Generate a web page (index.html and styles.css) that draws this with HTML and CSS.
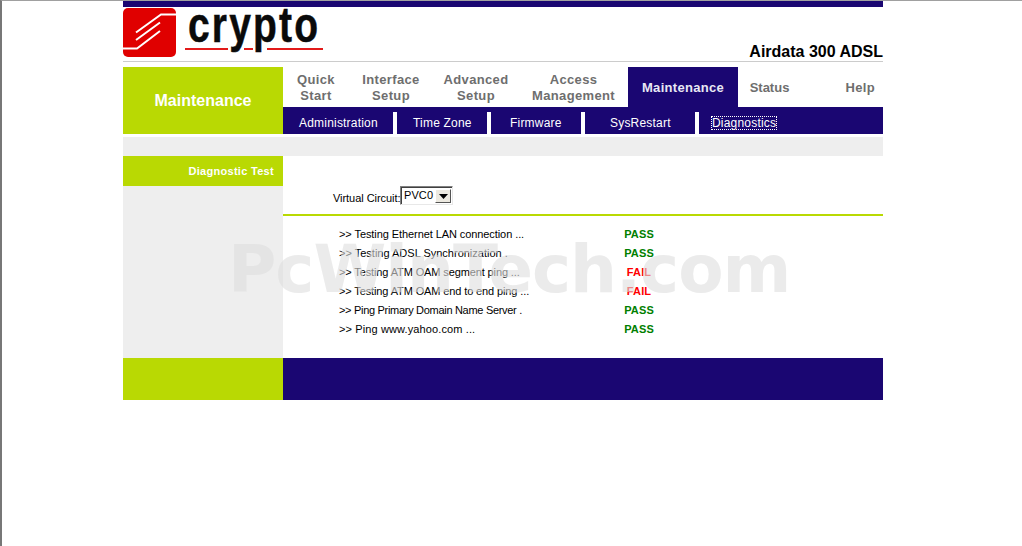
FILE: index.html
```html
<!DOCTYPE html>
<html lang="en">
<head>
<meta charset="utf-8">
<title>Airdata 300 ADSL - Diagnostics</title>
<link rel="stylesheet" href="styles.css">
</head>
<body>
<div class="page">
  <div class="topbar"></div>
  <header class="header">
    <svg class="logo-mark" viewBox="0 0 53 49" width="53" height="49" aria-hidden="true">
      <path d="M5 0H48a5 5 0 0 1 5 5V44a5 5 0 0 1-5 5H5a5 5 0 0 1-5-5V5a5 5 0 0 1 5-5Z" fill="#e00000"/>
      <path d="M53 6.500H38L13 24.500M37 14.500L13 32M37 23L14 40.500H0" fill="none" stroke="#fff" stroke-width="2"/>
    </svg>
    <div class="wordmark">
      <span class="rule rule-a"></span>
      <span class="rule rule-b"></span>
      <span class="rule rule-c"></span>
      <span class="wordmark-text">crypto</span>
    </div>
    <div class="model">Airdata 300 ADSL</div>
  </header>
  <nav class="nav">
    <div class="nav-title">Maintenance</div>
    <div class="nav-main">
      <div class="tabs">
        <a class="tab tab-quick">Quick<br>Start</a>
        <a class="tab tab-interface">Interface<br>Setup</a>
        <a class="tab tab-advanced">Advanced<br>Setup</a>
        <a class="tab tab-access">Access<br>Management</a>
        <a class="tab tab-maint active">Maintenance</a>
        <a class="tab tab-status">Status</a>
        <a class="tab tab-help">Help</a>
      </div>
      <div class="subtabs">
        <a class="sub sub-admin">Administration</a>
        <a class="sub sub-time">Time Zone</a>
        <a class="sub sub-firm">Firmware</a>
        <a class="sub sub-sys">SysRestart</a>
        <a class="sub sub-diag"><span class="focused">Diagnostics</span></a>
      </div>
    </div>
  </nav>
  <div class="strip"></div>
  <main class="content">
    <aside class="side">
      <div class="side-title">Diagnostic Test</div>
    </aside>
    <section class="panel">
      <div class="circuit">
        <label class="circuit-label" for="vc">Virtual Circuit:</label>
        <div class="select-wrap">
          <select id="vc" class="select"><option>PVC0</option></select>
          <span class="select-btn"><svg viewBox="0 0 9 5" width="9" height="5" aria-hidden="true"><path d="M0 0H9L4.500 5Z" fill="#000"/></svg></span>
        </div>
      </div>
      <div class="results">
        <div class="row"><span>&gt;&gt; Testing Ethernet LAN connection ...</span><b class="pass">PASS</b></div>
        <div class="row"><span>&gt;&gt; Testing ADSL Synchronization .</span><b class="pass">PASS</b></div>
        <div class="row"><span>&gt;&gt; Testing ATM OAM segment ping ...</span><b class="fail">FAIL</b></div>
        <div class="row"><span>&gt;&gt; Testing ATM OAM end to end ping ...</span><b class="fail">FAIL</b></div>
        <div class="row"><span>&gt;&gt; Ping Primary Domain Name Server .</span><b class="pass">PASS</b></div>
        <div class="row"><span>&gt;&gt; Ping www.yahoo.com ...</span><b class="pass">PASS</b></div>
      </div>
    </section>
  </main>
  <footer class="footer">
    <div class="footer-left"></div>
    <div class="footer-right"></div>
  </footer>
  <div class="watermark">PcWinTech.com</div>
</div>
</body>
</html>
```
FILE: styles.css
```css
* { box-sizing: border-box; }
html, body { margin: 0; padding: 0; }
body {
  height: 546px;
  overflow: hidden;
  background: #fff;
  border-top: 1px solid #a0a0a0;
  border-left: 2px solid #777;
  font-family: "Liberation Sans", Arial, sans-serif;
  color: #000;
}
.page { position: relative; width: 760px; margin-left: 121px; }
.topbar { height: 6px; background: #1a0672; }

.header {
  position: relative;
  display: flex;
  align-items: flex-start;
  height: 55px;
  border-bottom: 1px solid #ccc;
  padding-top: 1px;
}
.logo-mark { display: block; flex: none; }
.wordmark { position: relative; width: 147px; height: 53px; flex: none; }
.wordmark-text {
  position: absolute;
  left: 12px;
  top: -6px;
  font-size: 50px;
  line-height: 46px;
  font-weight: 700;
  color: #0a0a0a;
  transform: scaleX(.78);
  transform-origin: left top;
  letter-spacing: 2.800px;
  -webkit-text-stroke: .5px #0a0a0a;
}
.rule { position: absolute; top: 40px; height: 2px; background: #e21a1a; }
.rule-a { left: 9px; width: 43px; }
.rule-b { left: 68px; width: 9px; }
.rule-c { left: 91px; width: 56px; }
.model {
  margin-left: auto;
  align-self: flex-end;
  font-size: 16px;
  line-height: 18px;
  font-weight: 700;
}

.nav { display: flex; height: 67px; margin-top: 5px; }
.nav-title {
  flex: 0 0 160px;
  display: flex;
  align-items: center;
  justify-content: center;
  background: #b9d903;
  color: #fff;
  font-size: 16px;
  font-weight: 700;
}
.nav-main { flex: 1; display: flex; flex-direction: column; }
.tabs {
  display: grid;
  grid-template-columns: 66px 84px 86px 109px 110px 62px 83px;
  height: 40px;
}
.tab {
  display: flex;
  align-items: center;
  justify-content: center;
  text-align: center;
  padding-top: 1px;
  font-size: 13px;
  line-height: 16px;
  font-weight: 700;
  letter-spacing: .35px;
  color: #6e6e6e;
}
.tab.active { background: #1a0672; color: #e8e8f4; letter-spacing: .3px; }
.tab-status { letter-spacing: 0; padding-left: 1px; }
.tab-help { justify-content: flex-end; padding-right: 8px; }
.subtabs {
  display: grid;
  grid-template-columns: 110px 94px 94px 114px 188px;
  height: 27px;
  background: #1a0672;
  padding-top: 5px;
}
.sub {
  display: flex;
  align-items: center;
  height: 22px;
  color: #fff;
  font-size: 12px;
  letter-spacing: .2px;
}
.sub + .sub { border-left: 4px solid #fff; }
.sub-admin { padding-left: 16px; }
.sub-time { padding-left: 16px; }
.sub-firm { padding-left: 19px; }
.sub-sys { padding-left: 25px; }
.sub-diag { padding-left: 13px; }
.focused { outline: 1px dotted #fff; outline-offset: 0; line-height: 12px; }

.strip { height: 19px; margin-top: 3px; background: #eee; }

.content { display: flex; height: 202px; }
.side { flex: 0 0 160px; background: #eee; }
.side-title {
  height: 30px;
  line-height: 30px;
  background: #b9d903;
  color: #fff;
  text-align: right;
  padding-right: 9px;
  font-size: 11px;
  font-weight: 700;
  letter-spacing: .3px;
}
.panel { flex: 1; }
.circuit {
  display: flex;
  align-items: center;
  height: 60px;
  border-bottom: 2px solid #b9d903;
  padding: 23px 0 0 50px;
  margin-bottom: 8px;
}
.circuit-label { font-size: 11px; letter-spacing: -.05px; padding-top: 3px; flex: none; width: 67px; white-space: nowrap; }
.select-wrap { position: relative; flex: none; width: 53px; height: 19px; margin-top: -2px; }
.select {
  appearance: none;
  -webkit-appearance: none;
  display: block;
  width: 100%;
  height: 100%;
  margin: 0;
  padding: 0 0 1px 3px;
  background: #fff;
  border: 1px solid;
  border-color: #808080 #e8e8e8 #e8e8e8 #808080;
  border-radius: 0;
  box-shadow: inset 1px 1px 0 #404040;
  font: 11px "Liberation Sans", Arial, sans-serif;
  letter-spacing: .1px;
  color: #000;
}
.select-btn {
  position: absolute;
  right: 2px;
  top: 3px;
  width: 16px;
  height: 14px;
  display: flex;
  align-items: center;
  justify-content: center;
  background: #ece9e0;
  border: 1px solid;
  border-color: #fff #555 #555 #fff;
  pointer-events: none;
}
.results { padding-left: 56px; }
.row {
  display: grid;
  grid-template-columns: 285px 30px;
  height: 19px;
  align-items: center;
  font-size: 11px;
  white-space: nowrap;
}
.row:nth-child(1) span { letter-spacing: -.08px; }
.row:nth-child(3) span { letter-spacing: -.12px; }
.row:nth-child(4) span { letter-spacing: -.12px; }
.row:nth-child(5) span { letter-spacing: -.3px; }
.row:nth-child(6) span { letter-spacing: .12px; }
.row b { text-align: center; font-size: 11px; letter-spacing: .15px; }
.pass { color: #008000; }
.fail { color: #ff0000; }

.footer { display: flex; height: 42px; }
.footer-left { flex: 0 0 160px; background: #b9d903; }
.footer-right { flex: 1; background: #1a0672; }

.watermark {
  position: absolute;
  left: 105px;
  top: 230px;
  font-family: "DejaVu Sans", sans-serif;
  font-size: 66px;
  line-height: 78px;
  font-weight: 700;
  letter-spacing: -1px;
  color: #dfdfdf;
  opacity: .6;
  white-space: nowrap;
  pointer-events: none;
}
```
